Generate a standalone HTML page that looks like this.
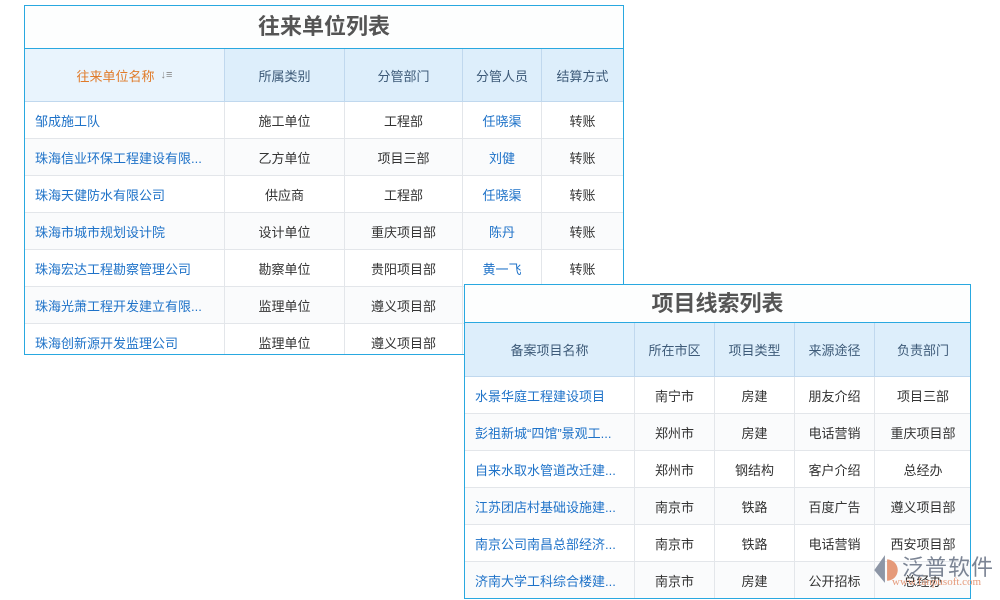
<!DOCTYPE html>
<html><head><meta charset="utf-8"><style>
body{margin:0;width:1000px;height:600px;background:#fff;position:relative;overflow:hidden;font-family:"Liberation Sans","Noto Sans CJK SC",sans-serif;font-size:13px;color:#333}
.box{position:absolute;border:1px solid #29a8e0;background:#fff;overflow:hidden;box-sizing:border-box}
.title{position:absolute;left:0;right:0;top:0;text-align:center;font-weight:bold;color:#555;font-size:22px;border-bottom:1px solid #29a8e0;background:#fdfefe}
.c{position:absolute;box-sizing:border-box;border-right:1px solid #e3e6ea;border-bottom:1px solid #e3e6ea;display:flex;align-items:center;justify-content:center;white-space:nowrap}
.h{background:#ddeefb;color:#3d5a78;border-color:#c0d8ee}
.l{justify-content:flex-start;padding-left:10px;color:#1e72c8}
.b{color:#1e72c8}
</style></head><body>
<div class="box" style="left:24px;top:5px;width:600px;height:350px" id="t1"></div>
<div class="box" style="left:464px;top:284px;width:507px;height:315px" id="t2"></div>
<div style="position:absolute;left:870px;top:552px;width:128px;height:45px">
<svg width="32" height="32" style="position:absolute;left:0;top:1px" viewBox="0 0 30 30"><path d="M14 2 L4 16 L14 28 Z" fill="#8d96a6"/><path d="M16 6 A10 10 0 1 1 16 26 Z" fill="#e59a7a"/></svg>
<div style="position:absolute;left:32px;top:-2px;font-size:22px;color:#7b8494;letter-spacing:1px">泛普软件</div>
<div style="position:absolute;left:22px;top:24px;font-size:11px;color:#e59a7a;font-family:'Liberation Serif',serif">www.fanpusoft.com</div>
</div>
<script>
function build(id,titleH,headH,rowH,cols,head,rows,styles){
 var b=document.getElementById(id),h='<div class="title" style="height:'+(titleH-1)+'px;line-height:'+(titleH-1)+'px">'+(id=='t1'?'往来单位列表':'项目线索列表')+'</div>';
 var x=0;cols.forEach(function(w,i){
  h+='<div class="c h" style="left:'+x+'px;top:'+titleH+'px;width:'+w+'px;height:'+headH+'px;'+(i==0&&id=='t1'?'color:#e07b2a;background:#e9f4fd':'')+'">'+head[i]+'</div>';
  rows.forEach(function(r,j){
   h+='<div class="c '+(styles[i]||'')+'" style="left:'+x+'px;top:'+(titleH+headH+j*rowH)+'px;width:'+w+'px;height:'+rowH+'px;background:'+(j%2?'#fafbfc':'#fff')+'">'+r[i]+'</div>';
  });x+=w;});
 b.innerHTML+=h;
}
build('t1',43,53,37,[200,120,118,79,82],['往来单位名称 <span style="font-size:11px;margin-left:6px;color:#888">↓≡</span>','所属类别','分管部门','分管人员','结算方式'],[
['邹成施工队','施工单位','工程部','任晓渠','转账'],
['珠海信业环保工程建设有限...','乙方单位','项目三部','刘健','转账'],
['珠海天健防水有限公司','供应商','工程部','任晓渠','转账'],
['珠海市城市规划设计院','设计单位','重庆项目部','陈丹','转账'],
['珠海宏达工程勘察管理公司','勘察单位','贵阳项目部','黄一飞','转账'],
['珠海光萧工程开发建立有限...','监理单位','遵义项目部','',''],
['珠海创新源开发监理公司','监理单位','遵义项目部','','']],['l','','','b','']);
build('t2',38,54,37,[170,80,80,80,97],['备案项目名称','所在市区','项目类型','来源途径','负责部门'],[
['水景华庭工程建设项目','南宁市','房建','朋友介绍','项目三部'],
['彭祖新城“四馆”景观工...','郑州市','房建','电话营销','重庆项目部'],
['自来水取水管道改迁建...','郑州市','钢结构','客户介绍','总经办'],
['江苏团店村基础设施建...','南京市','铁路','百度广告','遵义项目部'],
['南京公司南昌总部经济...','南京市','铁路','电话营销','西安项目部'],
['济南大学工科综合楼建...','南京市','房建','公开招标','总经办']],['l','','','','']);
</script>
</body></html>
